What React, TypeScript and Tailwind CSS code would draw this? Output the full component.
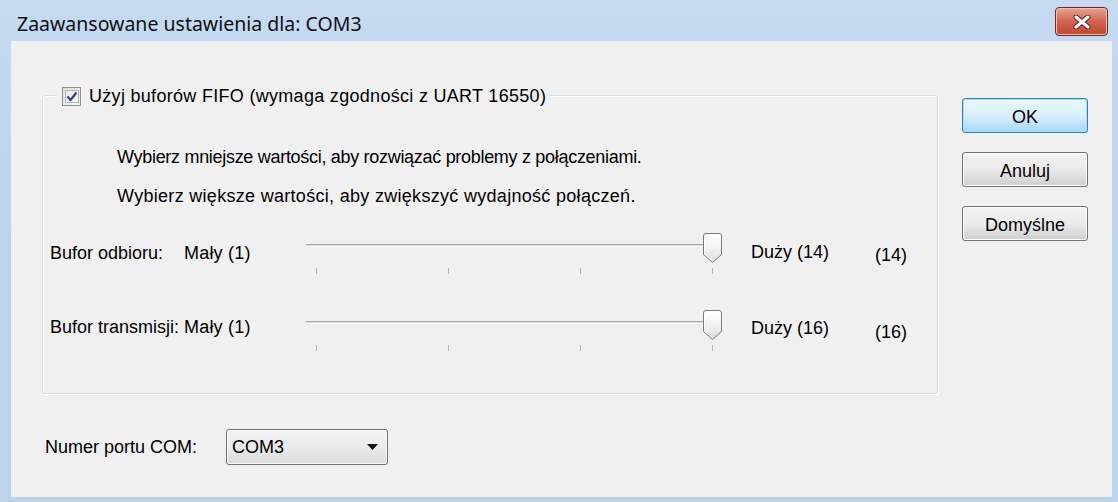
import React from "react";

const body = { fontFamily: '"Liberation Sans", Arial, sans-serif' };

function Slider() {
  const ticks = [11, 143, 275, 407];
  return (
    <svg width="420" height="46" viewBox="0 0 420 46" className="block">
      <defs>
        <linearGradient id="thumbg" x1="0" y1="0" x2="0" y2="1">
          <stop offset="0" stopColor="#ffffff" />
          <stop offset="0.45" stopColor="#f4f4f4" />
          <stop offset="1" stopColor="#dcdcdc" />
        </linearGradient>
      </defs>
      <rect x="1" y="14" width="416" height="1" fill="#a9a9a9" />
      <rect x="1" y="15" width="416" height="1" fill="#dedede" />
      <rect x="1" y="16" width="416" height="1" fill="#ffffff" />
      {ticks.map((t) => (
        <line key={t} x1={t + 0.5} y1="38" x2={t + 0.5} y2="44" stroke="#b4b4b4" strokeWidth="1" />
      ))}
      <path
        d="M398.5 6 Q398.5 3.5 401 3.5 H414 Q416.5 3.5 416.5 6 V24.5 L407.5 32.5 L398.5 24.5 Z"
        fill="url(#thumbg)"
        stroke="#7a7a7a"
        strokeWidth="1"
      />
      <path d="M399.5 6.5 V24 L407.5 31" fill="none" stroke="#ffffff" strokeWidth="1" opacity="0.8" />
    </svg>
  );
}

function SliderRow({
  label,
  big,
  value,
  labelMt,
  bigMt,
  valMt,
}: {
  label: string;
  big: string;
  value: string;
  labelMt: string;
  bigMt: string;
  valMt: string;
}) {
  return (
    <div className="flex items-start pl-[7px] h-[46px]">
      <div className={`w-[134px] leading-[20px] ${labelMt}`}>{label}</div>
      <div className={`w-[121px] leading-[20px] tracking-[0.2px] ${labelMt}`}>Mały (1)</div>
      <Slider />
      <div className={`ml-[26px] w-[124px] leading-[20px] ${bigMt}`}>{big}</div>
      <div className={`leading-[20px] ${valMt}`}>{value}</div>
    </div>
  );
}

function Btn({ children, primary }: { children: React.ReactNode; primary?: boolean }) {
  return (
    <div
      className={
        primary
          ? "w-[126px] h-[35px] rounded-[3px] border border-[#3c7fb1] bg-gradient-to-b from-[#eaf6fd] via-[#d9f0fc] to-[#a7d9f5] flex items-center justify-center text-[18px] shadow-[inset_0_0_0_1px_#9fe0f9]"
          : "w-[126px] h-[35px] rounded-[3px] border border-[#707070] bg-gradient-to-b from-[#f2f2f2] via-[#ebebeb] to-[#cfcfcf] flex items-center justify-center text-[18px] shadow-[inset_0_0_0_1px_#fcfcfc]"
      }
    >
      <span className="leading-[20px] mt-[2px]">{children}</span>
    </div>
  );
}

export default function App() {
  return (
    <div
      className="w-[1118px] h-[502px] flex flex-col bg-gradient-to-b from-[#c6daf1] via-[#bcd3ec] to-[#bcd3ec] text-black overflow-hidden"
      style={body}
    >
      {/* title bar */}
      <div className="h-[41px] flex items-start justify-between pl-[17px] pr-[10px] shrink-0">
        <div
          className="mt-[12px] text-[19.5px] leading-[24px] text-[#111]"
          style={{ fontFamily: '"Noto Sans", "Open Sans", sans-serif' }}
        >
          Zaawansowane ustawienia dla: COM3
        </div>
        <div className="mt-[7px] w-[53px] h-[29px] rounded-[4px] border border-[#6e2b22] bg-gradient-to-b from-[#e7a496] via-[#d0634f] to-[#c0462f] flex items-center justify-center shadow-[inset_0_0_0_1px_#eec1b6]">
          <svg width="20" height="14" viewBox="0 0 20 14">
            <path d="M4 2 L16 12 M16 2 L4 12" stroke="#4a2a28" strokeWidth="5" strokeLinecap="round" />
            <path d="M4 2 L16 12 M16 2 L4 12" stroke="#ffffff" strokeWidth="3" strokeLinecap="round" />
          </svg>
        </div>
      </div>

      {/* client area */}
      <div className="flex-1 ml-[11px] mr-[6px] mb-[5px] bg-[#f0f0f0] flex text-[18px]">
        <div className="pl-[31px] pt-[54px] flex flex-col">
          {/* group box */}
          <div className="w-[896px] h-[299px] rounded-[3px] border border-[#d5dfe5] shadow-[inset_1px_1px_0_#ffffff,1px_1px_0_#ffffff] flex flex-col">
            <div className="-mt-[11px] ml-[14px] self-start bg-[#f0f0f0] pl-[5px] pr-[4px] h-[22px] flex items-center">
              <div className="w-[19px] h-[19px] border border-[#8e8f8f] bg-gradient-to-br from-[#dcdcdc] to-[#f8f8f8] p-[2px] flex">
                <div className="flex-1 bg-gradient-to-br from-[#e4e4e4] to-[#fdfdfd] border border-[#b5b5b5] flex items-center justify-center">
                  <svg width="12" height="11" viewBox="0 0 12 11">
                    <path d="M1.5 5.5 L4.5 9 L10.5 1.5" fill="none" stroke="#2e3d8f" strokeWidth="2.2" strokeLinejoin="round" />
                  </svg>
                </div>
              </div>
              <span className="ml-[8px] leading-[20px] tracking-[0.3px]">
                Użyj buforów FIFO (wymaga zgodności z UART 16550)
              </span>
            </div>

            <div className="pl-[74px] mt-[40px] leading-[20px] tracking-[-0.3px]">
              Wybierz mniejsze wartości, aby rozwiązać problemy z połączeniami.
            </div>
            <div className="pl-[74px] mt-[19px] leading-[20px] tracking-[0.3px]">
              Wybierz większe wartości, aby zwiększyć wydajność połączeń.
            </div>

            <div className="mt-[24px]">
              <SliderRow label="Bufor odbioru:" big="Duży (14)" value="(14)" labelMt="mt-[13px]" bigMt="mt-[12px]" valMt="mt-[15px]" />
            </div>
            <div className="mt-[31px]">
              <SliderRow label="Bufor transmisji:" big="Duży (16)" value="(16)" labelMt="mt-[10px]" bigMt="mt-[11px]" valMt="mt-[15px]" />
            </div>
          </div>

          {/* COM port */}
          <div className="mt-[35px] pl-[3px] flex items-center">
            <div className="w-[181px] leading-[20px]">Numer portu COM:</div>
            <div className="w-[162px] h-[36px] rounded-[3px] border border-[#707070] bg-gradient-to-b from-[#f2f2f2] via-[#ebebeb] to-[#dcdcdc] shadow-[inset_0_0_0_1px_#fbfbfb] flex items-center pl-[5px] pr-[9px] justify-between">
              <span className="leading-[20px]">COM3</span>
              <svg width="11" height="6" viewBox="0 0 11 6">
                <path d="M0 0 H11 L5.5 6 Z" fill="#111" />
              </svg>
            </div>
          </div>
        </div>

        {/* buttons */}
        <div className="ml-[24px] pt-[57px] flex flex-col gap-[19px]">
          <Btn primary>OK</Btn>
          <Btn>Anuluj</Btn>
          <Btn>Domyślne</Btn>
        </div>
      </div>
    </div>
  );
}
